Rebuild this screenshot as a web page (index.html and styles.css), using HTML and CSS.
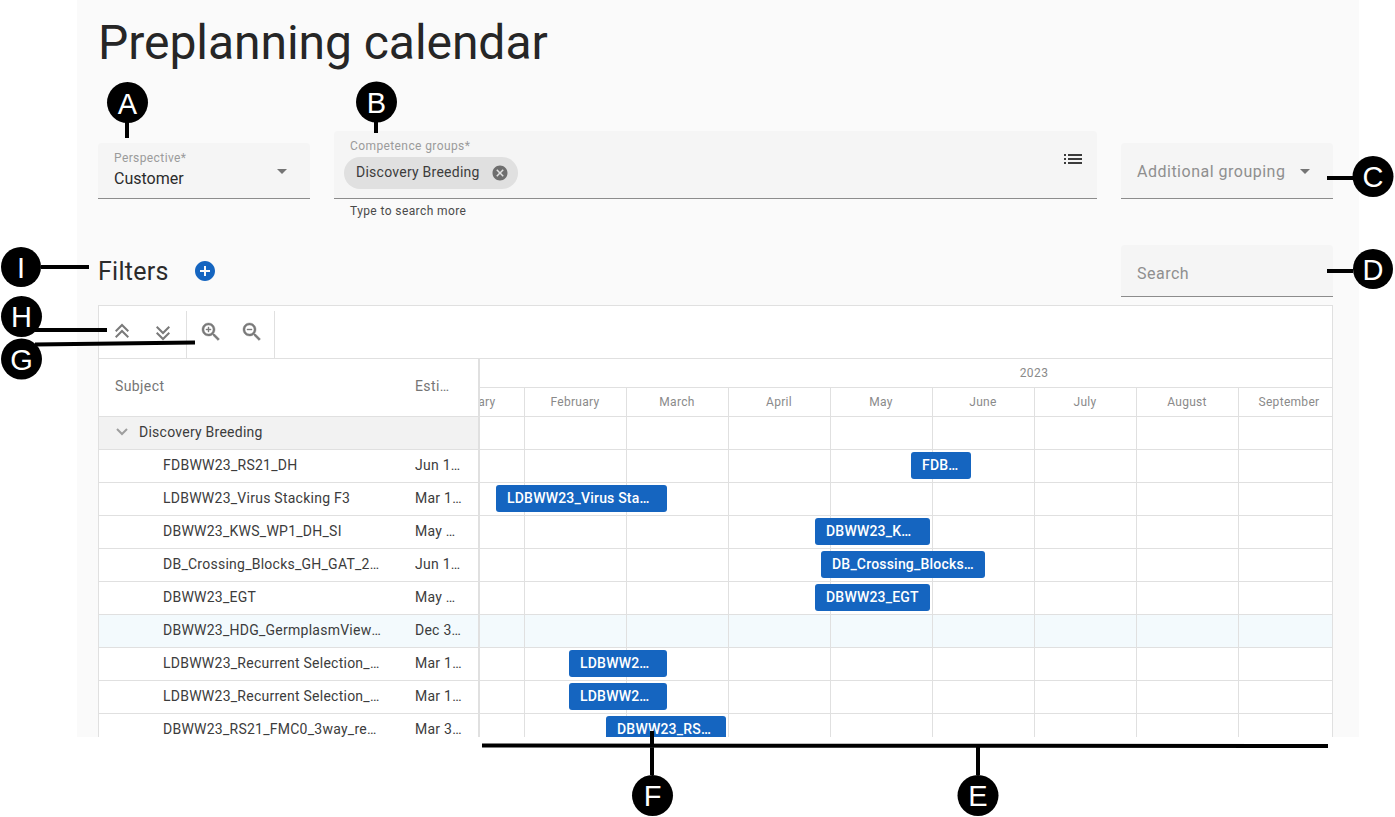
FILE: index.html
```html
<!DOCTYPE html>
<html lang="en">
<head>
    <meta charset="UTF-8">
    <meta name="viewport" content="width=device-width, initial-scale=1.0">
    <title>Preplanning calendar</title>
    <link rel="stylesheet" href="styles.css">
</head>
<body>

<main class="panel">
    <h1 class="page-title">Preplanning calendar</h1>

    <div class="field-row">
        <div class="field field-perspective">
            <span class="field-label">Perspective*</span>
            <span class="field-value">Customer</span>
            <svg class="field-arrow" viewBox="0 0 24 24"><path d="M7 10l5 5 5-5z"/></svg>
        </div>

        <div class="field-group">
            <div class="field field-competence">
                <span class="field-label">Competence groups*</span>
                <span class="chip">
                    Discovery Breeding
                    <svg class="chip-close" viewBox="0 0 24 24"><path d="M12 2C6.47 2 2 6.47 2 12s4.47 10 10 10 10-4.47 10-10S17.53 2 12 2zm5 13.59L15.59 17 12 13.41 8.41 17 7 15.59 10.59 12 7 8.41 8.41 7 12 10.59 15.59 7 17 8.41 13.41 12 17 15.59z"/></svg>
                </span>
                <svg class="field-list" viewBox="0 0 24 24"><path d="M3 13h2v-2H3v2zm0 4h2v-2H3v2zm0-8h2V7H3v2zm4 4h14v-2H7v2zm0 4h14v-2H7v2zM7 7v2h14V7H7z"/></svg>
            </div>
            <div class="field-help">Type to search more</div>
        </div>

        <div class="field field-grouping">
            <span class="field-placeholder">Additional grouping</span>
            <svg class="field-arrow" viewBox="0 0 24 24"><path d="M7 10l5 5 5-5z"/></svg>
        </div>
    </div>

    <div class="filter-row">
        <h2 class="filter-title">Filters</h2>
        <svg class="filter-add" viewBox="0 0 24 24"><path d="M12 2C6.48 2 2 6.48 2 12s4.48 10 10 10 10-4.48 10-10S17.52 2 12 2zm5 11h-4v4h-2v-4H7v-2h4V7h2v4h4v2z"/></svg>
        <div class="field field-search">
            <span class="field-placeholder">Search</span>
        </div>
    </div>

    <section class="gantt">
        <div class="toolbar">
            <div class="tool-group">
                <button class="tool"><svg viewBox="0 0 24 24"><path d="M17.59 18 19 16.59l-7-7-7 7L6.41 18 12 12.42 17.59 18zm0-6L19 10.59l-7-7-7 7L6.41 12 12 6.42 17.59 12z"/></svg></button>
                <button class="tool"><svg viewBox="0 0 24 24"><path d="M6.41 6 5 7.41l7 7 7-7L17.59 6 12 11.58 6.41 6zm0 6L5 13.41l7 7 7-7L17.59 12 12 17.58 6.41 12z"/></svg></button>
            </div>
            <div class="tool-group">
                <button class="tool tool-zoom"><svg viewBox="0 0 24 24"><path d="M15.5 14h-.79l-.28-.27C15.41 12.59 16 11.11 16 9.5 16 5.91 13.09 3 9.5 3S3 5.91 3 9.5 5.91 16 9.5 16c1.61 0 3.09-.59 4.23-1.57l.27.28v.79l5 4.99L20.49 19l-4.99-5zm-6 0C7.01 14 5 11.99 5 9.5S7.01 5 9.5 5 14 7.01 14 9.5 11.99 14 9.5 14zM12 10h-2v2H9v-2H7V9h2V7h1v2h2v1z"/></svg></button>
                <button class="tool tool-zoom"><svg viewBox="0 0 24 24"><path d="M15.5 14h-.79l-.28-.27C15.41 12.59 16 11.11 16 9.5 16 5.91 13.09 3 9.5 3S3 5.91 3 9.5 5.91 16 9.5 16c1.61 0 3.09-.59 4.23-1.57l.27.28v.79l5 4.99L20.49 19l-4.99-5zm-6 0C7.01 14 5 11.99 5 9.5S7.01 5 9.5 5 14 7.01 14 9.5 11.99 14 9.5 14zM7 9h5v1H7z"/></svg></button>
            </div>
        </div>

        <div class="gantt-body">
            <div class="grid-side">
                <div class="grid-head">
                    <span class="col-subject">Subject</span>
                    <span class="col-date">Estimated start</span>
                </div>
                <div class="grid-row grid-group">
                    <svg class="group-toggle" viewBox="0 0 14 14"><polyline points="2,4 7,9 12,4"/></svg>
                    Discovery Breeding
                </div>
                <div class="grid-row"><span class="col-subject">FDBWW23_RS21_DH</span><span class="col-date">Jun 12, 2023</span></div>
                <div class="grid-row"><span class="col-subject">LDBWW23_Virus Stacking F3</span><span class="col-date">Mar 13, 2023</span></div>
                <div class="grid-row"><span class="col-subject">DBWW23_KWS_WP1_DH_SI</span><span class="col-date">May 29, 2023</span></div>
                <div class="grid-row"><span class="col-subject">DB_Crossing_Blocks_GH_GAT_2023_spring</span><span class="col-date">Jun 19, 2023</span></div>
                <div class="grid-row"><span class="col-subject">DBWW23_EGT</span><span class="col-date">May 29, 2023</span></div>
                <div class="grid-row row-active"><span class="col-subject">DBWW23_HDG_GermplasmViewer_test</span><span class="col-date">Dec 31, 2023</span></div>
                <div class="grid-row"><span class="col-subject">LDBWW23_Recurrent Selection_cycle1</span><span class="col-date">Mar 13, 2023</span></div>
                <div class="grid-row"><span class="col-subject">LDBWW23_Recurrent Selection_cycle2</span><span class="col-date">Mar 13, 2023</span></div>
                <div class="grid-row"><span class="col-subject">DBWW23_RS21_FMC0_3way_reselection</span><span class="col-date">Mar 31, 2023</span></div>
            </div>

            <div class="timeline">
                <div class="timeline-inner">
                    <div class="time-year">2023</div>
                    <div class="time-months">
                        <span>January</span><span>February</span><span>March</span><span>April</span>
                        <span>May</span><span>June</span><span>July</span><span>August</span>
                        <span>September</span><span>October</span><span>November</span><span>December</span>
                    </div>
                    <div class="time-row"></div>
                    <div class="time-row"><div class="bar" style="left: 488px; width: 60px">FDBWW23_RS21_DH</div></div>
                    <div class="time-row"><div class="bar" style="left: 73px; width: 171px">LDBWW23_Virus Stacking F3</div></div>
                    <div class="time-row"><div class="bar" style="left: 392px; width: 115px">DBWW23_KWS_WP1_DH_SI</div></div>
                    <div class="time-row"><div class="bar" style="left: 398px; width: 164px">DB_Crossing_Blocks_GH_GAT_2023_spring</div></div>
                    <div class="time-row"><div class="bar" style="left: 392px; width: 115px">DBWW23_EGT</div></div>
                    <div class="time-row row-active"></div>
                    <div class="time-row"><div class="bar" style="left: 146px; width: 98px">LDBWW23_Recurrent Selection_cycle1</div></div>
                    <div class="time-row"><div class="bar" style="left: 146px; width: 98px">LDBWW23_Recurrent Selection_cycle2</div></div>
                    <div class="time-row"><div class="bar" style="left: 183px; width: 120px">DBWW23_RS21_FMC0_3way_reselection</div></div>
                </div>
            </div>
        </div>
    </section>
</main>

<!-- letters drawn over the screenshot -->
<svg class="callouts" viewBox="0 0 1395 817">
    <path d="M127 122V138M376 122V133M1327 178H1353M1327 271H1353M41 267H89M35 330H107M35 344.500L195 342.500M652 731V775M482 745.500L1328 746M978 746V775"/>
    <circle cx="127.500" cy="102.500" r="20.500"/>
    <circle cx="376.500" cy="102" r="20.500"/>
    <circle cx="1373" cy="176.500" r="20.500"/>
    <circle cx="1373" cy="269" r="20"/>
    <circle cx="21" cy="267" r="20"/>
    <circle cx="21.500" cy="316.500" r="20.500"/>
    <circle cx="21.500" cy="359" r="20.500"/>
    <circle cx="652.500" cy="795.500" r="20.500"/>
    <circle cx="978" cy="795.500" r="20.500"/>
    <text x="127.500" y="114">A</text>
    <text x="376.500" y="113">B</text>
    <text x="1373" y="187">C</text>
    <text x="1373" y="279.500">D</text>
    <text x="21" y="277.500">I</text>
    <text x="21.500" y="327">H</text>
    <text x="21.500" y="369.500">G</text>
    <text x="652.500" y="806">F</text>
    <text x="978" y="806">E</text>
</svg>

</body>
</html>
```

FILE: styles.css
```css
* {
    box-sizing: border-box;
}

html, body {
    height: 817px;
    overflow: hidden;
}

body {
    margin: 0;
    padding: 0;
    font-family: 'Roboto', sans-serif;
    background-color: #fff;
    color: #2b2b2b;
    position: relative;
}

.panel {
    width: 1282px;
    height: 737px;
    margin-left: 77px;
    padding: 0 26px 0 21px;
    background-color: #fafafa;
    overflow: hidden;
}

.page-title {
    margin: 0;
    height: 131px;
    padding-top: 15px;
    font-size: 48px;
    font-weight: 400;
    line-height: 56px;
    letter-spacing: -0.05px;
    color: #262626;
}

.field-row {
    display: flex;
    gap: 24px;
    align-items: flex-start;
    height: 90px;
}

.field {
    position: relative;
    background-color: #f5f5f5;
    border-bottom: 1px solid #8c8c8c;
    border-radius: 4px 4px 0 0;
    padding: 0 16px;
}

.field-perspective,
.field-grouping {
    width: 212px;
    height: 56px;
    margin-top: 12px;
}

.field-group {
    flex: 1;
}

.field-competence {
    height: 68px;
}

.field-label {
    display: block;
    padding-top: 8px;
    font-size: 12px;
    line-height: 14px;
    letter-spacing: 0.4px;
    color: #9b9b9b;
}

.field-value {
    display: block;
    margin-top: 4px;
    font-size: 16px;
    line-height: 20px;
}

.field-placeholder {
    display: block;
    padding-top: 19px;
    font-size: 16px;
    line-height: 20px;
    letter-spacing: 0.5px;
    color: #8f8f8f;
}

.field-arrow {
    position: absolute;
    top: 16px;
    right: 16px;
    width: 24px;
    height: 24px;
    fill: #757575;
}

.field-list {
    position: absolute;
    top: 16px;
    right: 12px;
    width: 24px;
    height: 24px;
    fill: #3c3c3c;
}

.chip {
    display: inline-flex;
    align-items: center;
    gap: 11px;
    height: 32px;
    margin: 4px 0 0 -6px;
    padding: 0 9px 2px 12px;
    border-radius: 16px;
    background-color: #e0e0e0;
    font-size: 14px;
    letter-spacing: 0.25px;
    color: #3c3c3c;
}

.chip-close {
    width: 18px;
    height: 18px;
    margin-bottom: -2px;
    fill: #6e6e6e;
}

.field-help {
    padding: 5px 16px 0;
    font-size: 12px;
    line-height: 14px;
    letter-spacing: 0.4px;
    color: #4a4a4a;
}

.filter-row {
    display: flex;
    align-items: center;
    height: 52px;
    margin-top: 24px;
}

.filter-title {
    margin: 0 24px 0 0;
    font-size: 25px;
    font-weight: 400;
    letter-spacing: 0.25px;
    color: #2b2b2b;
}

.filter-add {
    width: 24px;
    height: 24px;
    fill: #1565c0;
}

.field-search {
    width: 212px;
    height: 52px;
    margin-left: auto;
}

.gantt {
    margin-top: 8px;
    border: 1px solid #e0e0e0;
    border-bottom: 0;
    background-color: #fff;
}

.toolbar {
    display: flex;
    height: 53px;
    padding: 5px;
    border-bottom: 1px solid #e0e0e0;
    background-color: #fafafa;
    background-image: linear-gradient(#fff, #fff);
    background-origin: content-box;
    background-clip: content-box;
}

.tool-group {
    display: flex;
    height: 48px;
    margin-bottom: -5px;
    border-right: 1px solid #e0e0e0;
}

.tool-group:first-child {
    width: 86px;
    margin-left: -3px;
}

.tool-group:nth-child(2) {
    width: 88px;
    padding-left: 3px;
}

.tool {
    width: 41px;
    height: 42px;
    padding: 0;
    border: 0;
    background: none;
    display: flex;
    align-items: center;
    justify-content: center;
}

.tool svg {
    width: 24px;
    height: 24px;
    fill: #7a7a7a;
}

.tool-zoom svg {
    stroke: #7a7a7a;
    stroke-width: 0.4;
}

.gantt-body {
    display: flex;
}

.grid-side {
    width: 381px;
    flex: none;
    border-right: 2px solid #e0e0e0;
}

.grid-head {
    display: flex;
    align-items: center;
    height: 58px;
    padding: 0 0 3px 16px;
    border-bottom: 1px solid #e0e0e0;
    font-size: 14px;
    letter-spacing: 0.4px;
    color: #757575;
}

.grid-head .col-subject {
    width: 300px;
    padding-right: 0;
}

.grid-head .col-date {
    width: 36px;
}

.grid-row {
    display: flex;
    align-items: center;
    height: 33px;
    padding: 0 0 2px 64px;
    border-bottom: 1px solid #e0e0e0;
    font-size: 14px;
    letter-spacing: 0.25px;
    color: #3c3c3c;
}

.grid-group {
    padding-left: 16px;
    background-color: #f2f2f2;
    gap: 10px;
}

.group-toggle {
    width: 14px;
    height: 14px;
    fill: none;
    stroke: #9e9e9e;
    stroke-width: 2;
}

.col-subject {
    width: 252px;
    flex: none;
    padding-right: 34px;
    overflow: hidden;
    white-space: nowrap;
    text-overflow: ellipsis;
}

.col-date {
    width: 48px;
    flex: none;
    overflow: hidden;
    white-space: nowrap;
    text-overflow: ellipsis;
}

.row-active {
    background-color: #f3fafd;
}

.timeline {
    flex: 1;
    overflow: hidden;
}

.timeline-inner {
    width: 1224px;
    margin-left: -57px;
}

.time-year {
    height: 29px;
    padding-right: 2px;
    border-bottom: 1px solid #e0e0e0;
    text-align: center;
    font-size: 12px;
    line-height: 28px;
    letter-spacing: 0.4px;
    color: #8a8a8a;
}

.time-months {
    display: grid;
    grid-template-columns: repeat(12, 102px);
    height: 29px;
    border-bottom: 1px solid #e0e0e0;
}

.time-months span {
    padding-right: 1px;
    border-right: 1px solid #e0e0e0;
    text-align: center;
    font-size: 12px;
    line-height: 28px;
    letter-spacing: 0.3px;
    color: #8a8a8a;
}

.time-row {
    position: relative;
    height: 33px;
    border-bottom: 1px solid #e0e0e0;
    background-image: linear-gradient(to right, transparent 101px, #e0e0e0 101px);
    background-size: 102px 100%;
}

.bar {
    position: absolute;
    top: 2px;
    height: 27px;
    padding: 0 11px;
    border-radius: 3px;
    background-color: #1565c0;
    color: #fff;
    font-size: 14px;
    font-weight: 500;
    line-height: 27px;
    letter-spacing: 0.2px;
    overflow: hidden;
    white-space: nowrap;
    text-overflow: ellipsis;
}

.callouts {
    position: absolute;
    top: 0;
    left: 0;
    width: 1395px;
    height: 817px;
}

.callouts path {
    fill: none;
    stroke: #000;
    stroke-width: 4;
}

.callouts circle {
    fill: #000;
}

.callouts text {
    font-family: 'Liberation Sans', Arial, sans-serif;
    font-size: 29px;
    fill: #fff;
    text-anchor: middle;
}
```
